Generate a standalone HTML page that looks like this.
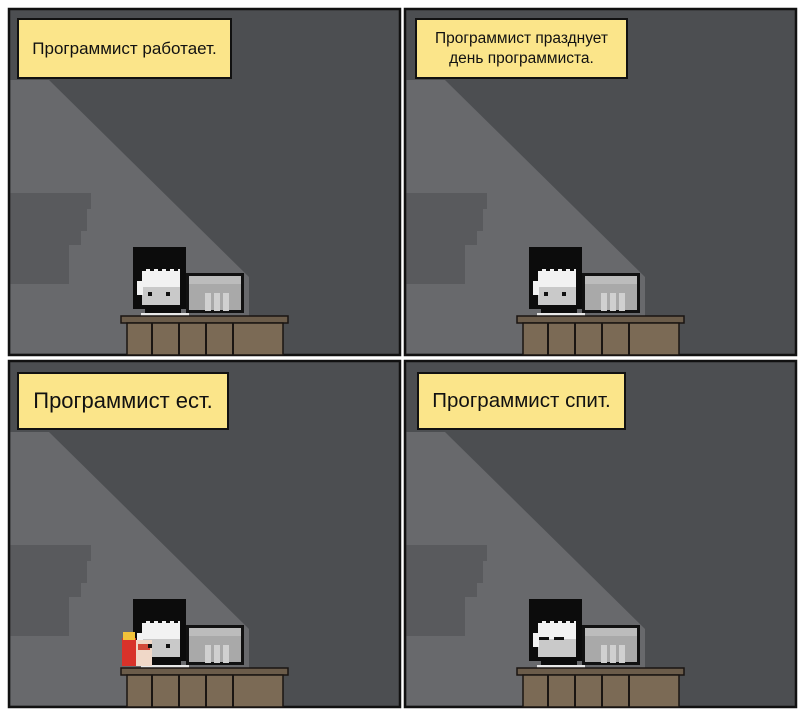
<!DOCTYPE html>
<html><head><meta charset="utf-8"><style>
html,body{margin:0;padding:0;background:#fff;width:807px;height:722px;overflow:hidden}
.cap{position:absolute;background:#fbe58a;border:2.5px solid #111;box-sizing:border-box;display:flex;align-items:center;justify-content:center;text-align:center;font-family:"Liberation Sans","DejaVu Sans",sans-serif;color:#111;white-space:nowrap}
</style></head><body>
<svg width="807" height="722" style="position:absolute;left:0;top:0">
<defs>
<g id="sc">
<rect x="0" y="0" width="391" height="346" fill="#4c4e51" stroke="#111" stroke-width="2.5"/>
<polygon points="1.5,71 40,71 240,268 240,344.5 1.5,344.5" fill="#68696c"/>
<polygon points="1.5,184 82,184 82,200 78,200 78,222 72,222 72,236 60,236 60,262 1.5,262" fill="#595a5d"/>
<polygon points="1.5,262 60,262 60,275 1.5,275" fill="#595a5d"/>
<rect x="124" y="238" width="53" height="62" fill="#0c0c0c"/>
<rect x="133" y="260" width="38" height="36" fill="#f2f2f2"/>
<rect x="133" y="278" width="38" height="18" fill="#c9c9c9"/>
<rect x="133" y="258" width="4" height="4" fill="#0c0c0c"/><rect x="141" y="258" width="4" height="4" fill="#0c0c0c"/><rect x="149" y="258" width="4" height="4" fill="#0c0c0c"/><rect x="157" y="258" width="4" height="4" fill="#0c0c0c"/><rect x="165" y="258" width="4" height="4" fill="#0c0c0c"/>
<rect x="128" y="272" width="6" height="14" fill="#f2f2f2"/>
<rect x="136" y="298" width="36" height="9" fill="#0c0c0c"/>
<rect x="132" y="304" width="48" height="4" fill="#e8e8e8"/>
<rect x="177" y="264" width="58" height="40" fill="#111"/>
<rect x="180" y="267" width="52" height="34" fill="#a9a9a9"/>
<rect x="180" y="267" width="52" height="8" fill="#bcbcbc"/>
<rect x="196" y="284" width="6" height="18" fill="#d0d0d0"/><rect x="205" y="284" width="6" height="18" fill="#d0d0d0"/><rect x="214" y="284" width="6" height="18" fill="#d0d0d0"/>
<rect x="112" y="307" width="167" height="7" fill="#6b5c4a" stroke="#1a1512" stroke-width="1.5"/>
<rect x="118" y="314" width="156" height="32" fill="#7b6a55" stroke="#1a1512" stroke-width="1.5"/>
<line x1="143" y1="314" x2="143" y2="346" stroke="#1a1512" stroke-width="2"/>
<line x1="170" y1="314" x2="170" y2="346" stroke="#1a1512" stroke-width="2"/>
<line x1="197" y1="314" x2="197" y2="346" stroke="#1a1512" stroke-width="2"/>
<line x1="224" y1="314" x2="224" y2="346" stroke="#1a1512" stroke-width="2"/>
</g>
</defs>
<use href="#sc" x="9" y="9"/>
<use href="#sc" x="405" y="9"/>
<use href="#sc" x="9" y="361"/>
<use href="#sc" x="405" y="361"/>
<rect x="122" y="638" width="14" height="28" fill="#d8322a"/>
<rect x="123" y="632" width="12" height="8" fill="#f2c23a"/>
<rect x="136" y="640" width="16" height="26" fill="#f0d8c8"/>
<rect x="138" y="644" width="12" height="6" fill="#d24a3a"/>
<rect x="539" y="637" width="10" height="3" fill="#111"/>
<rect x="554" y="637" width="10" height="3" fill="#111"/>
</svg>
<div style="position:absolute;left:148px;top:292px;width:4px;height:4px;background:#111"></div>
<div style="position:absolute;left:166px;top:292px;width:4px;height:4px;background:#111"></div>
<div style="position:absolute;left:544px;top:292px;width:4px;height:4px;background:#111"></div>
<div style="position:absolute;left:562px;top:292px;width:4px;height:4px;background:#111"></div>
<div style="position:absolute;left:148px;top:644px;width:4px;height:4px;background:#111"></div>
<div style="position:absolute;left:166px;top:644px;width:4px;height:4px;background:#111"></div>
<div class="cap" style="left:17px;top:18px;width:215px;height:61px;font-size:17px">Программист работает.</div>
<div class="cap" style="left:415px;top:18px;width:213px;height:61px;font-size:15.5px;line-height:20px">Программист празднует<br>день программиста.</div>
<div class="cap" style="left:17px;top:372px;width:212px;height:58px;font-size:22px">Программист ест.</div>
<div class="cap" style="left:417px;top:372px;width:209px;height:58px;font-size:20.5px">Программист спит.</div>
</body></html>
